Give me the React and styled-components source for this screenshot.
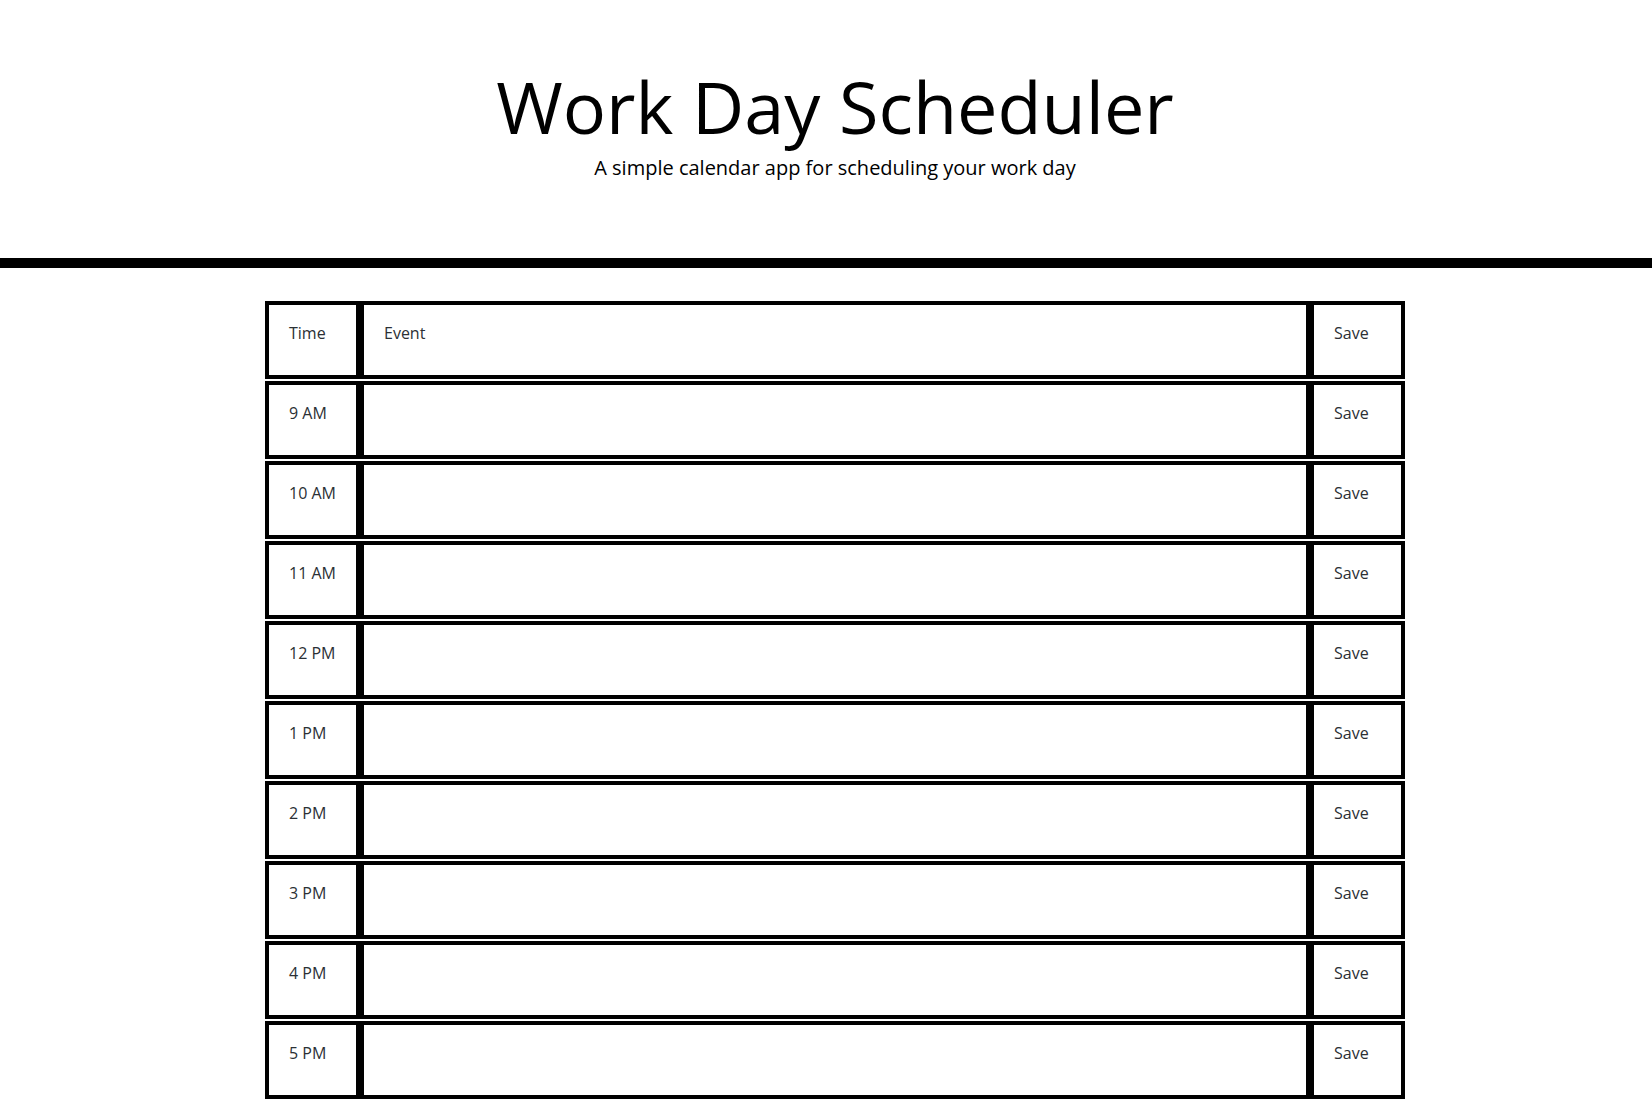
import React, { useState } from 'react'
import styled, { createGlobalStyle, css } from 'styled-components'

const hours = ['9 AM', '10 AM', '11 AM', '12 PM', '1 PM', '2 PM', '3 PM', '4 PM', '5 PM']

export default function App() {
  const [events, setEvents] = useState({})

  return (
    <>
      <GlobalStyle />
      <Header>
        <Title>Work Day Scheduler</Title>
        <Lead>A simple calendar app for scheduling your work day</Lead>
      </Header>
      <Main>
        <Container>
          <Row>
            <TimeCell>Time</TimeCell>
            <EventCell>Event</EventCell>
            <SaveButton type="button">Save</SaveButton>
          </Row>
          {hours.map((hour) => (
            <Row key={hour}>
              <TimeCell>{hour}</TimeCell>
              <EventInput
                value={events[hour] || ''}
                onChange={(e) => setEvents({ ...events, [hour]: e.target.value })}
              />
              <SaveButton type="button">Save</SaveButton>
            </Row>
          ))}
        </Container>
      </Main>
    </>
  )
}

const GlobalStyle = createGlobalStyle`
  html {
    scrollbar-width: none;
  }
  html::-webkit-scrollbar {
    display: none;
  }
  body {
    margin: 0;
    font-family: "Open Sans", "Liberation Sans", sans-serif;
    color: #212529;
    background: #fff;
  }
`

const Header = styled.header`
  padding: 63px 0 75px 18px;
  text-align: center;
  border-bottom: 10px solid #000;
  color: #000;
`

const Title = styled.h1`
  margin: 0;
  font-size: 72px;
  font-weight: 400;
  line-height: 1.2;
`

const Lead = styled.p`
  margin: 4px 0 0;
  font-size: 20px;
  font-weight: 400;
  line-height: 30px;
`

const Main = styled.main`
  padding: 33px 0 0 18px;
`

const Container = styled.div`
  width: 1140px;
  margin: 0 auto;
`

const Row = styled.div`
  display: grid;
  grid-template-columns: 95px 1fr 95px;
  height: 78px;
  margin-bottom: 2px;
`

const cell = css`
  box-sizing: border-box;
  height: 78px;
  margin: 0;
  border: 4px solid #000;
  border-radius: 0;
  padding: 16px 20px;
  background: #fff;
  font-family: "Open Sans", "Liberation Sans", sans-serif;
  font-size: 16px;
  line-height: 24px;
  color: #2b3035;
  text-align: left;
`

const TimeCell = styled.div`
  ${cell}
`

const EventCell = styled.div`
  ${cell}
`

const EventInput = styled.textarea`
  ${cell}
  width: 100%;
  resize: none;
  outline: none;
  overflow: hidden;
`

const SaveButton = styled.button`
  ${cell}
  padding-bottom: 30px;
  cursor: pointer;
`
